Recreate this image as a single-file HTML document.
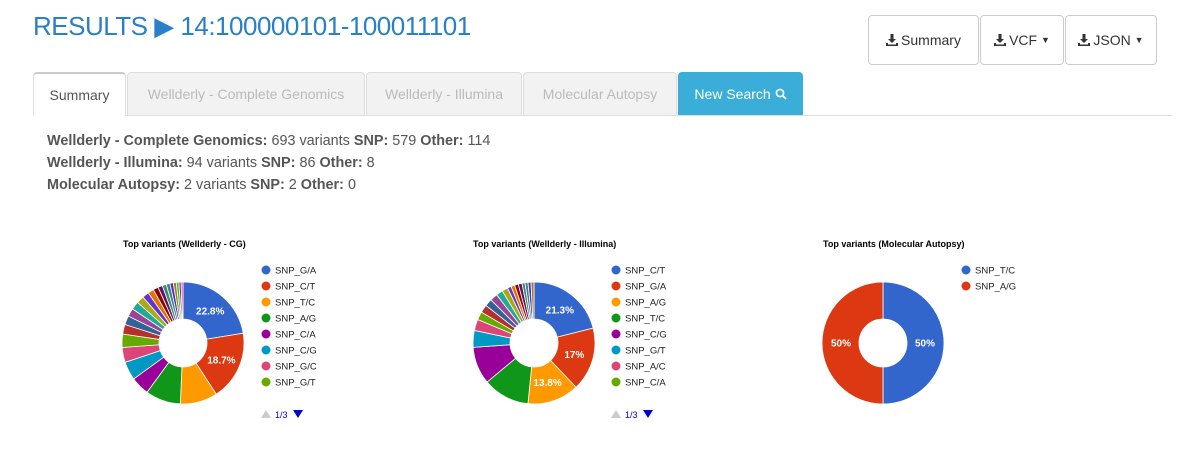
<!DOCTYPE html>
<html><head><meta charset="utf-8"><style>
body{margin:0;width:1178px;height:453px;background:#fff;font-family:"Liberation Sans",sans-serif;position:relative;overflow:hidden}
.a{position:absolute}
h1{position:absolute;left:33px;top:11px;margin:0;font-weight:normal;font-size:26px;color:#2a7fc9;letter-spacing:-0.5px}
.btn{position:absolute;top:15px;height:50px;border:1px solid #ccc;border-radius:4px;box-sizing:border-box;font-size:14px;color:#333;display:flex;align-items:center;justify-content:center;background:#fff}
.btn svg{margin-right:3px}
.tab{position:absolute;top:72px;height:43px;box-sizing:border-box;border:1px solid #ddd;border-bottom:none;border-radius:4px 4px 0 0;background:#f2f2f2;color:#bbb;font-size:14px;display:flex;align-items:center;justify-content:center}
.sum{position:absolute;left:47px;font-size:14.4px;color:#555}
svg text{font-family:"Liberation Sans",sans-serif}
</style></head><body>
<h1>RESULTS &#9654; 14:100000101-100011101</h1>
<div class="btn" style="left:868px;width:111px"><svg width="12" height="12" viewBox="0 0 12 12"><path d="M4.5 0h3v5h2.5L6 9 2 5h2.5z M0 9h2v1.5h8V9h2v3H0z" fill="#333"/></svg>Summary</div>
<div class="btn" style="left:980px;width:84px"><svg width="12" height="12" viewBox="0 0 12 12"><path d="M4.5 0h3v5h2.5L6 9 2 5h2.5z M0 9h2v1.5h8V9h2v3H0z" fill="#333"/></svg>VCF&nbsp;<span style="font-size:9px">&#9660;</span></div>
<div class="btn" style="left:1065px;width:92px"><svg width="12" height="12" viewBox="0 0 12 12"><path d="M4.5 0h3v5h2.5L6 9 2 5h2.5z M0 9h2v1.5h8V9h2v3H0z" fill="#333"/></svg>JSON&nbsp;<span style="font-size:9px">&#9660;</span></div>
<div class="a" style="left:33px;top:115px;width:1139px;height:1px;background:#ddd"></div>
<div class="tab" style="left:33px;width:93px;height:44px;background:#fff;color:#555;border-top:2px solid #ccc">Summary</div>
<div class="tab" style="left:127px;width:238px">Wellderly - Complete Genomics</div>
<div class="tab" style="left:366px;width:156px">Wellderly - Illumina</div>
<div class="tab" style="left:523px;width:154px">Molecular Autopsy</div>
<div class="tab" style="left:678px;width:125px;background:#3aaed8;border-color:#3aaed8;color:#fff">New Search&nbsp;<svg width="12" height="12" viewBox="0 0 12 12"><circle cx="5" cy="5" r="3.6" fill="none" stroke="#fff" stroke-width="1.6"/><path d="M7.6 7.6L11 11" stroke="#fff" stroke-width="1.8"/></svg></div>
<div class="sum" style="top:133px"><b>Wellderly - Complete Genomics:</b> 693 variants <b>SNP:</b> 579 <b>Other:</b> 114</div>
<div class="sum" style="top:155px"><b>Wellderly - Illumina:</b> 94 variants <b>SNP:</b> 86 <b>Other:</b> 8</div>
<div class="sum" style="top:177px"><b>Molecular Autopsy:</b> 2 variants <b>SNP:</b> 2 <b>Other:</b> 0</div>
<svg id="s" class="a" style="left:0;top:0" width="1178" height="453"></svg>
<script>
var C=["#3366cc","#dc3912","#ff9900","#109618","#990099","#0099c6","#dd4477","#66aa00","#b82e2e","#316395","#994499","#22aa99","#aaaa11","#6633cc","#e67300","#8b0707","#651067","#329262","#5574a6","#3b3eac","#b77322","#16d620","#b91383","#f4359e","#9c5935","#a9c413"];
var s=document.getElementById('s'),h='';
function pie(cx,cy,vals,labs,pcts,title,tx,leg){
 var R=61,r=24,tot=vals.reduce(function(a,b){return a+b},0),a0=0;
 h+='<text x="'+tx+'" y="247" font-size="9" font-weight="bold" fill="#000">'+title+'</text>';
 vals.forEach(function(v,i){var a1=a0+v/tot*2*Math.PI;
  function p(rad,a){return (cx+rad*Math.sin(a)).toFixed(2)+','+(cy-rad*Math.cos(a)).toFixed(2)}
  var lg=(a1-a0)>Math.PI?1:0;
  h+='<path d="M'+p(R,a0)+'A'+R+','+R+' 0 '+lg+' 1 '+p(R,a1)+'L'+p(r,a1)+'A'+r+','+r+' 0 '+lg+' 0 '+p(r,a0)+'Z" fill="'+C[i%C.length]+'" stroke="#fff" stroke-width="0.8"/>';
  if(pcts[i]){var m=(a0+a1)/2;h+='<text x="'+(cx+42*Math.sin(m))+'" y="'+(cy-42*Math.cos(m)+3.5)+'" font-size="10" font-weight="bold" fill="#fff" text-anchor="middle">'+pcts[i]+'</text>';}
  a0=a1;});
 labs.forEach(function(l,i){h+='<circle cx="'+(leg)+'" cy="'+(270+i*16)+'" r="4.5" fill="'+C[i]+'"/><text x="'+(leg+9)+'" y="'+(273.5+i*16)+'" font-size="9.5" fill="#222">'+l+'</text>';});
 if(labs.length>2){h+='<polygon points="'+(leg-5)+',418 '+(leg)+',410 '+(leg+5)+',418" fill="#ccc"/><text x="'+(leg+9)+'" y="418" font-size="9" fill="#00c">1/3</text><polygon points="'+(leg+27)+',410 '+(leg+37)+',410 '+(leg+32)+',418" fill="#00c"/>';}
}
var v1=[22.8,18.7,10,9.5,5,5,4,3.6,2.6,2.4,2.2,2.2,2,1.8,1.6,1.4,1.2,1.1,1,0.9,0.8,0.7,0.6,0.5];
pie(183,343,v1,["SNP_G/A","SNP_C/T","SNP_T/C","SNP_A/G","SNP_C/A","SNP_C/G","SNP_G/C","SNP_G/T"],["22.8%","18.7%"],"Top variants (Wellderly - CG)",123,266);
var v2=[21.3,17,13.8,12.5,10,4.5,3,2.2,2.1,2,2,1.8,1.6,1,1,1,1,0.8,0.8,0.8,0.8];
pie(534,343,v2,["SNP_C/T","SNP_G/A","SNP_A/G","SNP_T/C","SNP_C/G","SNP_G/T","SNP_A/C","SNP_C/A"],["21.3%","17%","13.8%"],"Top variants (Wellderly - Illumina)",473,616);
pie(883,343,[50,50],["SNP_T/C","SNP_A/G"],["50%","50%"],"Top variants (Molecular Autopsy)",823,966);
s.innerHTML=h;
</script>
</body></html>
